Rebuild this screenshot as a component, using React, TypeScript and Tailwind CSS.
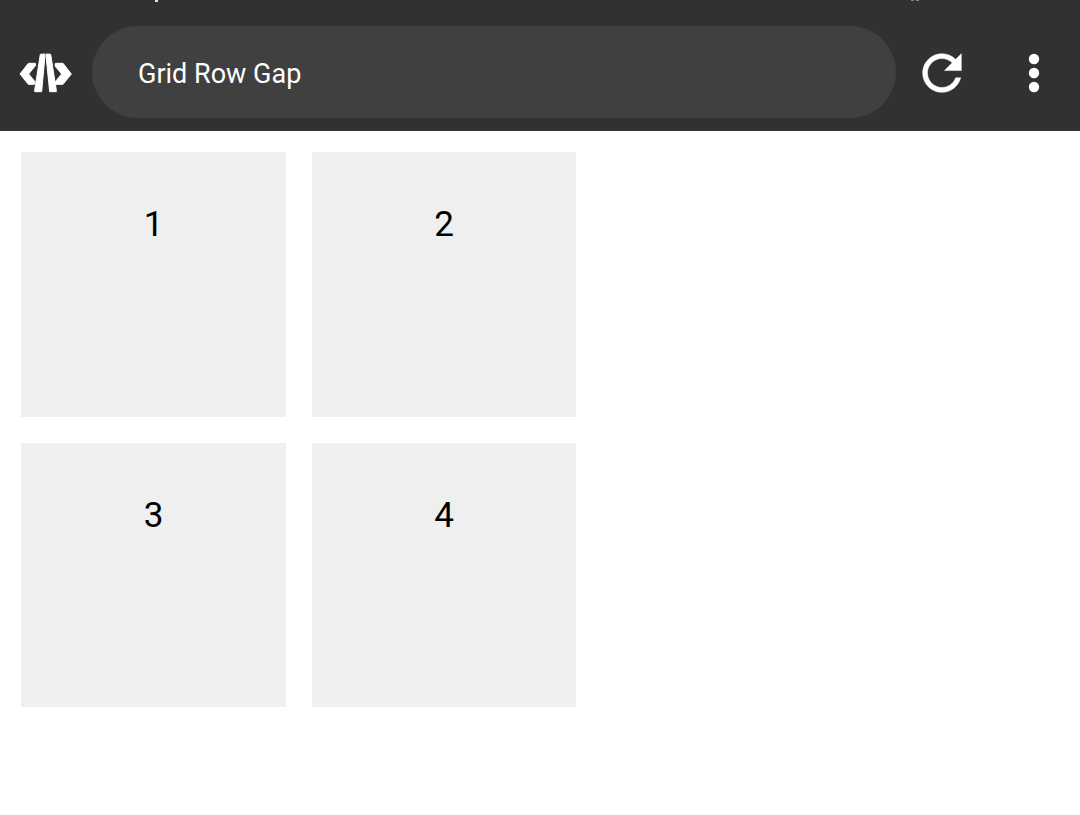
const cells = [1, 2, 3, 4];

function Logo() {
  return (
    <svg viewBox="58 38 159 120" className="h-[42px] w-[53px] shrink-0 pt-[2px]" fill="#fff" stroke="#fff" strokeWidth="3" strokeLinejoin="round" role="img" aria-label="Code editor">
      <path d="M86 69H107L108 75L87 101L106 124L104 132H86L61 101Z" />
      <path d="M167 69H190L215 101L190 132H169L166 125L186 101L166 77Z" />
      <path d="M122 42L133 41L136 45L126 154H105V150Z" />
      <path d="M153 42L142 41L139 45L150 154H170V150Z" />
      <path d="M133 41H142" strokeWidth="2" />
    </svg>
  );
}

function RefreshIcon() {
  return (
    <svg viewBox="0 0 24 24" className="size-[58px]" fill="#fff" aria-hidden="true">
      <path d="M17.65 6.35C16.2 4.9 14.21 4 12 4c-4.42 0-7.99 3.58-7.99 8s3.57 8 7.99 8c3.73 0 6.84-2.55 7.73-6h-2.08c-.82 2.33-3.04 4-5.65 4-3.31 0-6-2.69-6-6s2.69-6 6-6c1.66 0 3.14.69 4.22 1.78L13 11h7V4l-2.35 2.35z" stroke="#fff" strokeWidth=".2" />
    </svg>
  );
}

function MoreIcon() {
  return (
    <svg viewBox="0 0 24 24" className="size-[58px]" fill="#fff" aria-hidden="true">
      <circle cx="12" cy="6.2" r="2.15" />
      <circle cx="12" cy="12" r="2.15" />
      <circle cx="12" cy="17.8" r="2.15" />
    </svg>
  );
}

export default function App() {
  return (
    <div className="min-h-screen bg-white font-[Roboto,sans-serif] text-black">
      <header className="relative flex items-center bg-[#313131] pt-[26px] pr-[17px] pb-[13px] pl-[19px]">
        <span className="absolute top-0 left-[155px] h-[2px] w-[3px] bg-[#dedede]" />
        <span className="absolute top-0 left-[911px] flex gap-[2px]">
          <span className="h-px w-[3px] bg-[#858585]" />
          <span className="h-px w-[3px] bg-[#858585]" />
        </span>
        <Logo />
        <input
          type="text"
          aria-label="Page title"
          defaultValue="Grid Row Gap"
          className="ml-5 h-[92px] min-w-0 flex-1 rounded-full bg-[#404040] px-[46px] pt-1 text-[27px] text-white outline-none"
        />
        <button type="button" aria-label="Refresh" className="ml-[17px] shrink-0 pt-[2px]">
          <RefreshIcon />
        </button>
        <button type="button" aria-label="More options" className="ml-[34px] shrink-0 pt-[2px]">
          <MoreIcon />
        </button>
      </header>
      <main className="grid grid-cols-[265px_264px] grid-rows-[265px_264px] gap-[26px] p-[21px]">
        {cells.map((n) => (
          <div key={n} className="bg-[#efefef] pt-[52px] text-center text-[35px] leading-[41px]">
            {n}
          </div>
        ))}
      </main>
    </div>
  );
}
